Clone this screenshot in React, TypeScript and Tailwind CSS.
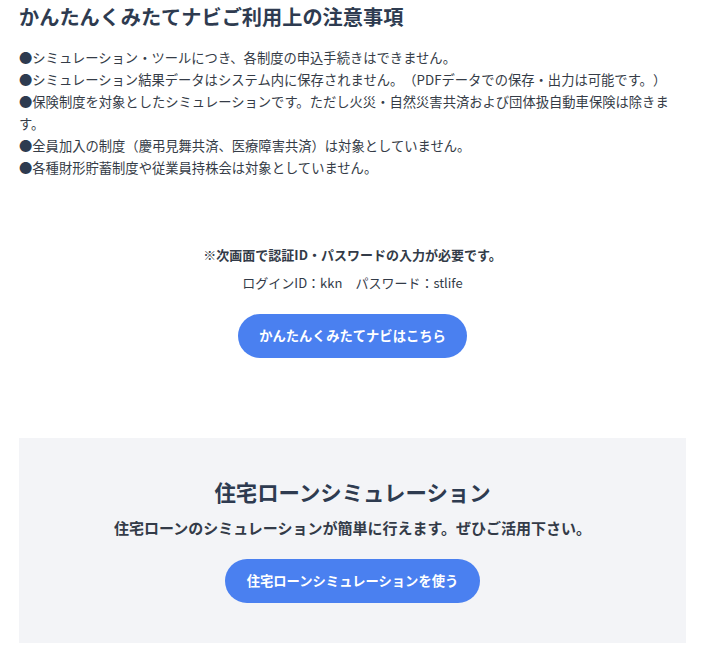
import React from 'react';

const notes = [
  'シミュレーション・ツールにつき、各制度の申込手続きはできません。',
  'シミュレーション結果データはシステム内に保存されません。（PDFデータでの保存・出力は可能です。）',
  '保険制度を対象としたシミュレーションです。ただし火災・自然災害共済および団体扱自動車保険は除きます。',
  '全員加入の制度（慶弔見舞共済、医療障害共済）は対象としていません。',
  '各種財形貯蓄制度や従業員持株会は対象としていません。',
];

export default function App() {
  return (
    <div
      lang="ja"
      className="w-[702px] min-h-[657px] bg-white px-[19px] pt-[2px] text-[#333b48] [text-spacing-trim:space-all]"
      style={{ fontFamily: '"Noto Sans CJK JP", sans-serif' }}
    >
      <div className="w-[667px]">
        <h1 className="text-[20.2px] leading-[30px] font-bold text-[#2e3b50]">
          かんたんくみたてナビご利用上の注意事項
        </h1>

        <ul className="mt-[15px] w-[667px] text-[13.3px] leading-[22px] text-[#353c47]">
          {notes.map((n, i) => (
            <li key={i}>
              <span className="text-[#2e3b50]">●</span>
              {n}
            </li>
          ))}
        </ul>

        <div className="mt-[65px] flex flex-col items-center">
          <p className="text-[13px] leading-[22px] font-bold text-[#333b48]">
            ※次画面で認証ID・パスワードの入力が必要です。
          </p>
          <p className="mt-[6px] text-[13px] leading-[22px] text-[#333b48]">
            ログインID：kkn　パスワード：stlife
          </p>
          <button className="mt-[20px] h-[44px] w-[229px] rounded-full bg-[#4a80f0] text-[13.3px] font-bold text-white">
            かんたんくみたてナビはこちら
          </button>
        </div>

        <section className="mt-[80px] flex flex-col items-center bg-[#f3f4f7] pt-[38px] pb-[40px]">
          <h2 className="text-[21.4px] leading-[32px] font-bold text-[#2e3b50]">
            住宅ローンシミュレーション
          </h2>
          <p className="mt-[9px] text-[15px] leading-[22px] font-bold text-[#333b48]">
            住宅ローンのシミュレーションが簡単に行えます。ぜひご活用下さい。
          </p>
          <button className="mt-[20px] h-[44px] w-[255px] rounded-full bg-[#4a80f0] text-[13.3px] font-bold text-white">
            住宅ローンシミュレーションを使う
          </button>
        </section>
      </div>
    </div>
  );
}
